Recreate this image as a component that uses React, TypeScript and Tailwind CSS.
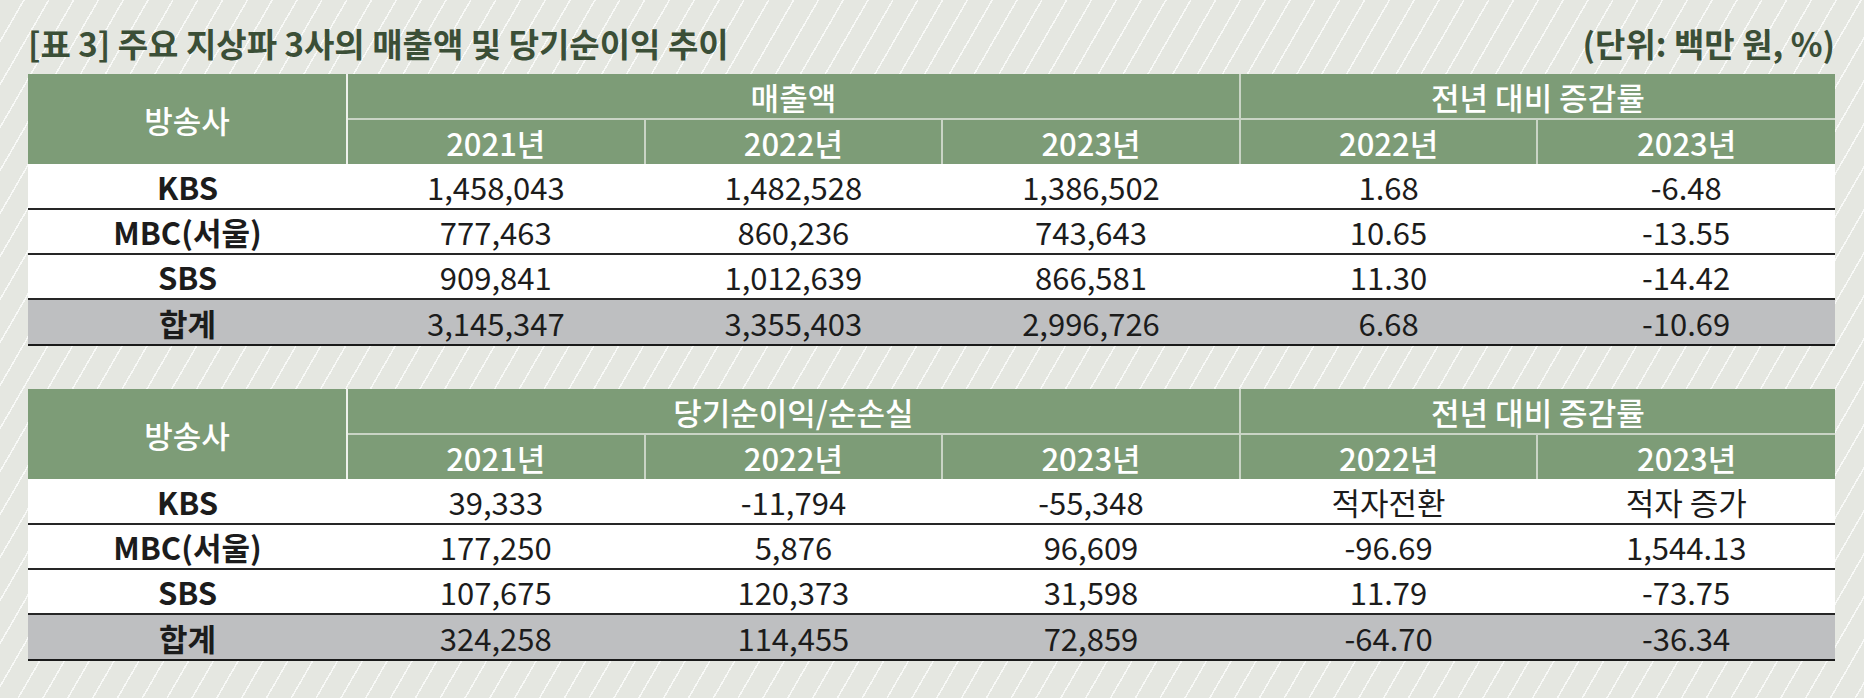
const font = '[font-family:"Noto_Sans_CJK_KR","Noto_Sans",sans-serif]';

type Row = { name: string; values: string[]; total?: boolean };

const salesRows: Row[] = [
  { name: 'KBS', values: ['1,458,043', '1,482,528', '1,386,502', '1.68', '-6.48'] },
  { name: 'MBC(서울)', values: ['777,463', '860,236', '743,643', '10.65', '-13.55'] },
  { name: 'SBS', values: ['909,841', '1,012,639', '866,581', '11.30', '-14.42'] },
  { name: '합계', values: ['3,145,347', '3,355,403', '2,996,726', '6.68', '-10.69'], total: true },
];

const profitRows: Row[] = [
  { name: 'KBS', values: ['39,333', '-11,794', '-55,348', '적자전환', '적자 증가'] },
  { name: 'MBC(서울)', values: ['177,250', '5,876', '96,609', '-96.69', '1,544.13'] },
  { name: 'SBS', values: ['107,675', '120,373', '31,598', '11.79', '-73.75'] },
  { name: '합계', values: ['324,258', '114,455', '72,859', '-64.70', '-36.34'], total: true },
];

const years = ['2021년', '2022년', '2023년'];
const rateYears = ['2022년', '2023년'];

function DataTable({ title, rows }: { title: string; rows: Row[] }) {
  return (
    <table className="w-[1807px] table-fixed border-collapse text-[31px] leading-none">
      <colgroup>
        <col className="w-[319px]" />
        <col />
        <col />
        <col />
        <col />
        <col />
      </colgroup>
      <thead className="bg-[#7d9c77] text-white">
        <tr className="h-[45px]">
          <th rowSpan={2} className="border-r-2 border-r-[#eef1ec] font-medium">
            방송사
          </th>
          <th colSpan={3} className="border-r-2 border-r-[#c9d4c5] border-b-2 border-b-[#c9d4c5] font-medium">
            {title}
          </th>
          <th colSpan={2} className="border-b-2 border-b-[#c9d4c5] font-medium">
            전년 대비 증감률
          </th>
        </tr>
        <tr className="h-[45px]">
          {years.map((y) => (
            <th key={y} className="border-r-2 border-r-[#c9d4c5] font-medium">
              {y}
            </th>
          ))}
          {rateYears.map((y, i) => (
            <th key={y} className={`font-medium ${i === 0 ? 'border-r-2 border-r-[#c9d4c5]' : ''}`}>
              {y}
            </th>
          ))}
        </tr>
      </thead>
      <tbody className="text-[#1c1c1c]">
        {rows.map((row) => (
          <tr
            key={row.name}
            className={
              row.total
                ? 'h-[46px] bg-[#bebfc1] border-t-2 border-t-[#4a4a4a] border-b-2 border-b-[#1a1a1a]'
                : 'h-[45px] bg-white border-b-2 border-b-[#262626]'
            }
          >
            <td className="text-center font-bold">{row.name}</td>
            {row.values.map((v, i) => (
              <td key={i} className="text-center font-normal">
                {v}
              </td>
            ))}
          </tr>
        ))}
      </tbody>
    </table>
  );
}

export default function App() {
  return (
    <div
      className={`w-[1864px] h-[698px] overflow-hidden bg-[#e5e7e1] bg-[repeating-linear-gradient(120deg,transparent_0px,transparent_20px,rgba(255,255,255,0.75)_20px,rgba(255,255,255,0.75)_21.5px)] pl-[28px] pr-[29px] ${font}`}
    >
      {/* Caption */}
      <div className="flex h-[74px] items-end justify-between pb-[14px] text-[33px] leading-none font-bold text-[#3b4f37]">
        <h1>[표 3] 주요 지상파 3사의 매출액 및 당기순이익 추이</h1>
        <span>(단위: 백만 원, %)</span>
      </div>

      <DataTable title="매출액" rows={salesRows} />

      <div className="h-[43px]" />

      <DataTable title="당기순이익/순손실" rows={profitRows} />
    </div>
  );
}
